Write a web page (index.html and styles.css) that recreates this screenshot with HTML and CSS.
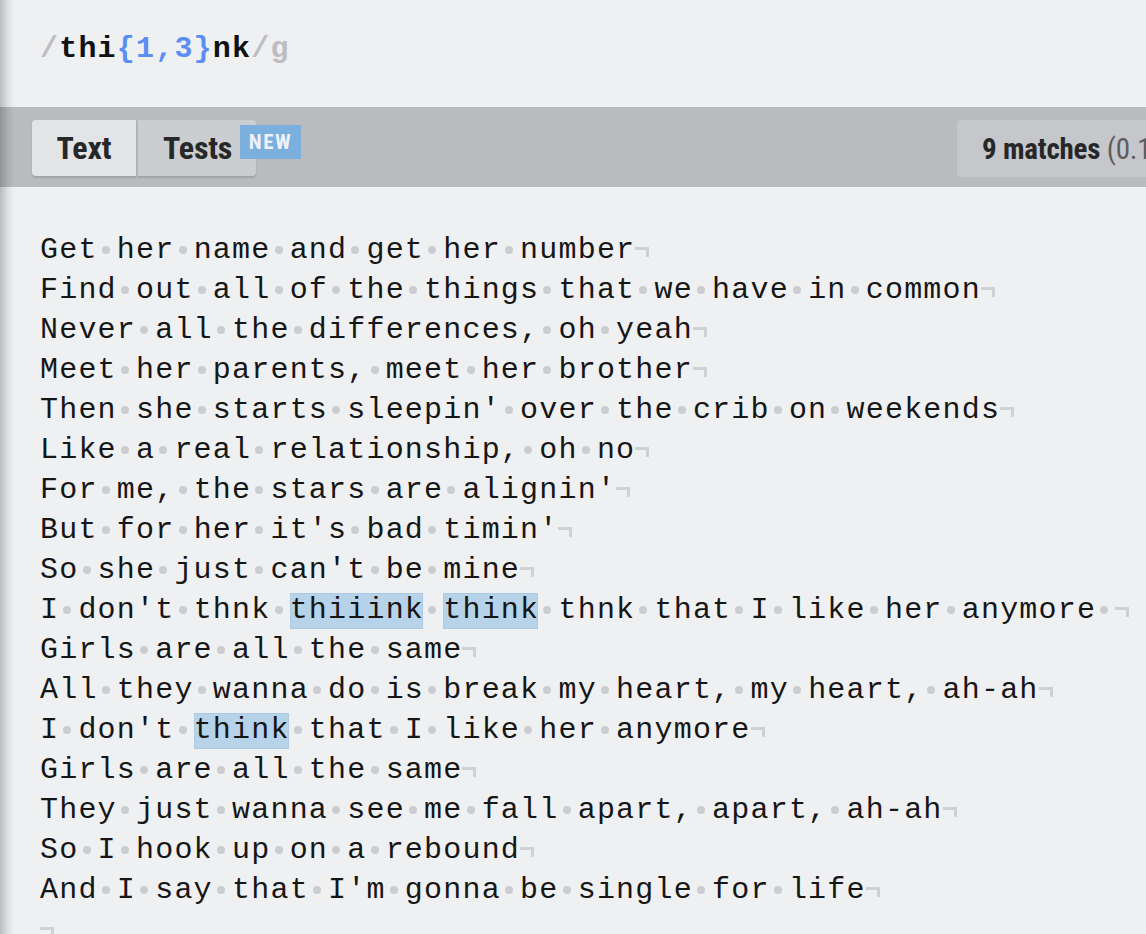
FILE: index.html
```html
<!DOCTYPE html>
<html lang="en">
<head>
<meta charset="utf-8">
<title>RegExr</title>
<link rel="stylesheet" href="styles.css">
</head>
<body>
<div class="expr"><span class="delim">/</span>thi<span class="quant">{1,3}</span>nk<span class="delim">/g</span></div>
<div class="bar">
  <div class="tabs">
    <div class="tab tab-text">Text</div>
    <div class="tab tab-tests">Tests<span class="badge">NEW</span></div>
  </div>
  <div class="matches"><b>9 matches</b> (0.1ms)</div>
</div>
<div class="editor">
<div class="ln">Get<span class="s"> </span>her<span class="s"> </span>name<span class="s"> </span>and<span class="s"> </span>get<span class="s"> </span>her<span class="s"> </span>number<span class="e"></span></div>
<div class="ln">Find<span class="s"> </span>out<span class="s"> </span>all<span class="s"> </span>of<span class="s"> </span>the<span class="s"> </span>things<span class="s"> </span>that<span class="s"> </span>we<span class="s"> </span>have<span class="s"> </span>in<span class="s"> </span>common<span class="e"></span></div>
<div class="ln">Never<span class="s"> </span>all<span class="s"> </span>the<span class="s"> </span>differences,<span class="s"> </span>oh<span class="s"> </span>yeah<span class="e"></span></div>
<div class="ln">Meet<span class="s"> </span>her<span class="s"> </span>parents,<span class="s"> </span>meet<span class="s"> </span>her<span class="s"> </span>brother<span class="e"></span></div>
<div class="ln">Then<span class="s"> </span>she<span class="s"> </span>starts<span class="s"> </span>sleepin'<span class="s"> </span>over<span class="s"> </span>the<span class="s"> </span>crib<span class="s"> </span>on<span class="s"> </span>weekends<span class="e"></span></div>
<div class="ln">Like<span class="s"> </span>a<span class="s"> </span>real<span class="s"> </span>relationship,<span class="s"> </span>oh<span class="s"> </span>no<span class="e"></span></div>
<div class="ln">For<span class="s"> </span>me,<span class="s"> </span>the<span class="s"> </span>stars<span class="s"> </span>are<span class="s"> </span>alignin'<span class="e"></span></div>
<div class="ln">But<span class="s"> </span>for<span class="s"> </span>her<span class="s"> </span>it's<span class="s"> </span>bad<span class="s"> </span>timin'<span class="e"></span></div>
<div class="ln">So<span class="s"> </span>she<span class="s"> </span>just<span class="s"> </span>can't<span class="s"> </span>be<span class="s"> </span>mine<span class="e"></span></div>
<div class="ln">I<span class="s"> </span>don't<span class="s"> </span>thnk<span class="s"> </span><span class="m">thiiink</span><span class="s"> </span><span class="m">think</span><span class="s"> </span>thnk<span class="s"> </span>that<span class="s"> </span>I<span class="s"> </span>like<span class="s"> </span>her<span class="s"> </span>anymore<span class="s"> </span><span class="e"></span></div>
<div class="ln">Girls<span class="s"> </span>are<span class="s"> </span>all<span class="s"> </span>the<span class="s"> </span>same<span class="e"></span></div>
<div class="ln">All<span class="s"> </span>they<span class="s"> </span>wanna<span class="s"> </span>do<span class="s"> </span>is<span class="s"> </span>break<span class="s"> </span>my<span class="s"> </span>heart,<span class="s"> </span>my<span class="s"> </span>heart,<span class="s"> </span>ah-ah<span class="e"></span></div>
<div class="ln">I<span class="s"> </span>don't<span class="s"> </span><span class="m">think</span><span class="s"> </span>that<span class="s"> </span>I<span class="s"> </span>like<span class="s"> </span>her<span class="s"> </span>anymore<span class="e"></span></div>
<div class="ln">Girls<span class="s"> </span>are<span class="s"> </span>all<span class="s"> </span>the<span class="s"> </span>same<span class="e"></span></div>
<div class="ln">They<span class="s"> </span>just<span class="s"> </span>wanna<span class="s"> </span>see<span class="s"> </span>me<span class="s"> </span>fall<span class="s"> </span>apart,<span class="s"> </span>apart,<span class="s"> </span>ah-ah<span class="e"></span></div>
<div class="ln">So<span class="s"> </span>I<span class="s"> </span>hook<span class="s"> </span>up<span class="s"> </span>on<span class="s"> </span>a<span class="s"> </span>rebound<span class="e"></span></div>
<div class="ln">And<span class="s"> </span>I<span class="s"> </span>say<span class="s"> </span>that<span class="s"> </span>I'm<span class="s"> </span>gonna<span class="s"> </span>be<span class="s"> </span>single<span class="s"> </span>for<span class="s"> </span>life<span class="e"></span></div>
<div class="ln"><span class="e"></span></div>
</div>
</body>
</html>
```

FILE: styles.css
```css
html {
  overflow: hidden;
}
body {
  margin: 0;
  background: #eff0f2;
  color: #161616;
  font-family: "Liberation Mono", "DejaVu Sans Mono", monospace;
}
body::after {
  content: "";
  position: fixed;
  left: 0;
  top: 0;
  bottom: 0;
  width: 14px;
  background: linear-gradient(to right, rgba(0,0,0,0.22), rgba(0,0,0,0.06) 60%, rgba(0,0,0,0));
  pointer-events: none;
}
.expr {
  height: 107px;
  box-sizing: border-box;
  padding: 29px 0 0 40px;
  font-size: 30px;
  letter-spacing: 1.2px;
  line-height: 40px;
  font-weight: 700;
  color: #111;
}
.delim {
  color: #bcbdc1;
}
.quant {
  color: #5b8ef4;
}
.bar {
  height: 80px;
  box-sizing: border-box;
  background: #b9bbbf;
  padding: 13px 0 0 32px;
  display: flex;
  align-items: flex-start;
  overflow: hidden;
  white-space: nowrap;
  font-family: "Roboto Condensed", "Liberation Sans Narrow", Roboto, sans-serif;
  font-stretch: condensed;
}
.tabs {
  display: flex;
  gap: 2px;
  flex-shrink: 0;
}
.tab {
  height: 56px;
  box-sizing: border-box;
  display: flex;
  align-items: center;
  font-size: 32px;
  font-weight: 700;
  letter-spacing: -0.2px;
  color: #262729;
  box-shadow: 0 2px 2px rgba(0,0,0,0.14);
}
.tab-text {
  width: 104px;
  justify-content: center;
  background: #e3e4e6;
  border-radius: 4px 0 0 4px;
}
.tab-tests {
  position: relative;
  width: 118px;
  padding-left: 25px;
  background: #cbcdd0;
  border-radius: 0 4px 4px 0;
}
.badge {
  position: absolute;
  left: 102px;
  top: 5px;
  width: 61px;
  height: 34px;
  display: flex;
  align-items: center;
  justify-content: center;
  background: #7aafde;
  color: #eef2f8;
  font-size: 21px;
  letter-spacing: 1.5px;
  font-weight: 700;
}
.matches {
  flex-shrink: 0;
  margin-left: 701px;
  height: 57px;
  box-sizing: border-box;
  padding: 0 0 0 25px;
  width: 260px;
  display: flex;
  align-items: center;
  gap: 0;
  background: #c5c7ca;
  border-radius: 4px;
  font-size: 29px;
  letter-spacing: -0.2px;
  color: #5c5d60;
  white-space: pre;
}
.matches b {
  color: #262729;
}
.editor {
  isolation: isolate;
  padding: 43px 0 0 40px;
  font-size: 30px;
  letter-spacing: 1.2px;
  line-height: 40px;
  color: #161616;
}
.ln {
  height: 40px;
  white-space: pre;
}
.s {
  position: relative;
}
.s::after {
  content: "";
  position: absolute;
  left: 50%;
  margin-left: -5.5px;
  top: 13px;
  width: 8px;
  height: 8px;
  border-radius: 50%;
  background: #cbccd0;
}
.e {
  display: inline-block;
  width: 11px;
  height: 7px;
  border-top: 3px solid #cfd0d3;
  border-right: 3px solid #cfd0d3;
  vertical-align: 1px;
}
.m {
  position: relative;
}
.m::before {
  content: "";
  position: absolute;
  z-index: -1;
  left: 0;
  right: 1px;
  top: 0;
  bottom: -2px;
  background: #b7d3e9;
  box-shadow: inset 0 0 0 1px #accae3;
}
```
